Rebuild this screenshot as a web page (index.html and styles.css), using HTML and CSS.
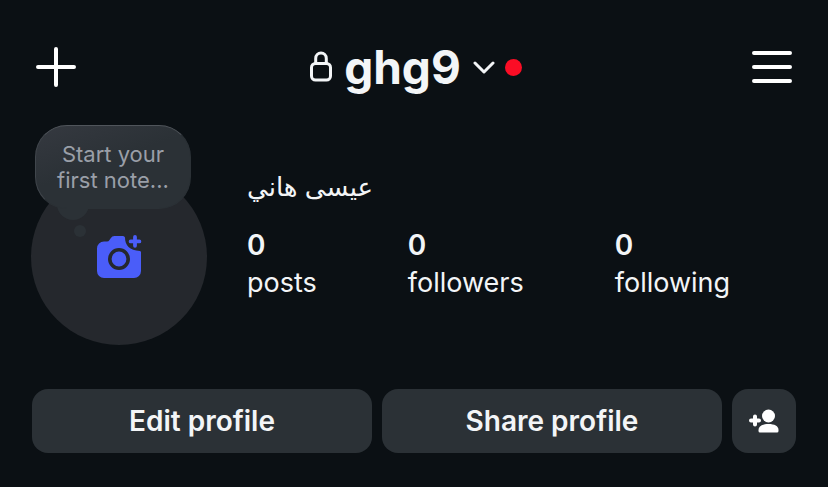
FILE: index.html
```html
<!DOCTYPE html>
<html lang="en">
<head>
    <meta charset="UTF-8">
    <meta name="viewport" content="width=device-width, initial-scale=1.0">
    <title>ghg9</title>
    <link rel="stylesheet" href="styles.css">
</head>
<body>
    <header class="top-bar">
        <button class="icon-btn" type="button" aria-label="Create">
            <svg width="40" height="40" viewBox="0 0 40 40" fill="none" stroke="#fff" stroke-width="4" stroke-linecap="round">
                <path d="M20 2v36M2 20h36"/>
            </svg>
        </button>
        <button class="account" type="button">
            <svg class="lock" width="28" height="32" viewBox="0 0 28 32" fill="none" stroke="#f3f5f7" stroke-width="3">
                <rect x="5.500" y="12.500" width="19" height="16.500" rx="4"/>
                <path d="M9.700 12V7.400a5.300 5.300 0 0 1 10.600 0V12"/>
            </svg>
            <span class="username">ghg9</span>
            <svg class="chevron" width="24" height="14" viewBox="0 0 24 14" fill="none" stroke="#f3f5f7" stroke-width="3" stroke-linecap="round" stroke-linejoin="round">
                <path d="M4 3l9 9 9-9"/>
            </svg>
            <span class="dot"></span>
        </button>
        <button class="icon-btn" type="button" aria-label="Menu">
            <svg width="40" height="40" viewBox="0 0 40 40" fill="none" stroke="#fff" stroke-width="4" stroke-linecap="round">
                <path d="M2 6h36M2 20h36M2 34h36"/>
            </svg>
        </button>
    </header>

    <main>
        <section class="profile">
            <div class="avatar">
                <svg width="46" height="44" viewBox="0 0 46 44">
                    <path fill="#4a5df9" d="M8 6.500h3q1.500 0 2.500-1.500l1.200-1.700Q16 1 18.500 1H27q1.500 0 2 1.500c0 7.500 4.500 13 15 13.500q1 .3 1 1.500V36a7 7 0 0 1-7 7H8a7 7 0 0 1-7-7V13.500a7 7 0 0 1 7-7z"/>
                    <circle cx="23" cy="24" r="9.200" fill="none" stroke="#25282d" stroke-width="3.600"/>
                    <path d="M39 2v8.800M34.600 6.400h8.800" stroke="#4a5df9" stroke-width="3.800" stroke-linecap="round"/>
                </svg>
                <button class="note" type="button">Start your<br>first note...</button>
            </div>
            <div class="info">
                <h1 class="name" lang="ar"><bdi>عيسى هاني</bdi></h1>
                <div class="stats">
                    <a class="stat" href="#"><strong>0</strong>posts</a>
                    <a class="stat" href="#"><strong>0</strong>followers</a>
                    <a class="stat" href="#"><strong>0</strong>following</a>
                </div>
            </div>
        </section>

        <div class="actions">
            <button class="btn" type="button">Edit profile</button>
            <button class="btn" type="button">Share profile</button>
            <button class="btn btn-square" type="button" aria-label="Discover people">
                <svg width="32" height="26" viewBox="0 0 32 26" fill="#fff">
                    <circle cx="20.500" cy="8" r="6.500"/>
                    <path d="M10.500 23v-1c0-4 4-6 10-6s10 2 10 6v1q0 1.500-1.500 1.500H12q-1.500 0-1.500-1.500z"/>
                    <path d="M7 8.500v8M3 12.500h8" stroke="#fff" stroke-width="4" stroke-linecap="round"/>
                </svg>
            </button>
        </div>
    </main>
</body>
</html>
```
FILE: styles.css
```css
* {
    box-sizing: border-box;
}
body {
    margin: 0;
    background-color: #0b1014;
    color: #f3f5f7;
    font-family: Inter, "DejaVu Sans", sans-serif;
}
button {
    padding: 0;
    border: none;
    background: none;
    color: inherit;
    font-family: inherit;
    cursor: pointer;
}
svg {
    display: block;
}
.top-bar {
    display: flex;
    align-items: center;
    justify-content: space-between;
    padding: 39px 36px 0;
}
.account {
    display: flex;
    align-items: center;
    gap: 10px;
}
.username {
    font-size: 46px;
    font-weight: 700;
    line-height: 56px;
}
.dot {
    width: 17px;
    height: 17px;
    border-radius: 50%;
    background-color: #fb0d25;
}
.profile {
    display: flex;
    gap: 40px;
    padding: 74px 31px 44px;
}
.avatar {
    position: relative;
    z-index: 0;
    display: flex;
    align-items: center;
    justify-content: center;
    flex: none;
    width: 176px;
    height: 176px;
    border-radius: 50%;
    background-color: #25282d;
}
/* note bubble over the top of the avatar */
.note {
    position: absolute;
    top: -44px;
    left: 4px;
    width: 156px;
    height: 84px;
    border: 1px solid #2b3136;
    border-top-color: #50555b;
    border-left-color: #40464c;
    border-radius: 32px;
    background: linear-gradient(160deg, #353940, #2b3136 45%);
    color: #9a9fa8;
    font-size: 22px;
    line-height: 26px;
    white-space: nowrap;
}
.note::before {
    content: "";
    position: absolute;
    top: 72px;
    left: 21px;
    width: 32px;
    height: 22px;
    border-radius: 4px 4px 16px 16px;
    background-color: #2b3136;
    z-index: -1;
}
.note::after {
    content: "";
    position: absolute;
    top: 99px;
    left: 38px;
    width: 12px;
    height: 12px;
    border-radius: 50%;
    background-color: #2b3136;
}
.name {
    margin: 0 0 21px;
    font-size: 26px;
    font-weight: 400;
    line-height: 36px;
}
.stats {
    display: flex;
    gap: 91px;
}
.stat {
    color: inherit;
    font-size: 27px;
    line-height: 38px;
    text-decoration: none;
}
.stat strong {
    display: block;
    font-size: 28px;
    font-weight: 600;
}
.actions {
    display: flex;
    gap: 10px;
    padding: 0 32px;
}
.btn {
    display: flex;
    align-items: center;
    justify-content: center;
    flex: 1;
    height: 64px;
    border-radius: 16px;
    background-color: #2b3136;
    font-size: 28px;
    font-weight: 600;
}
.btn-square {
    flex: 0 0 64px;
}
```
